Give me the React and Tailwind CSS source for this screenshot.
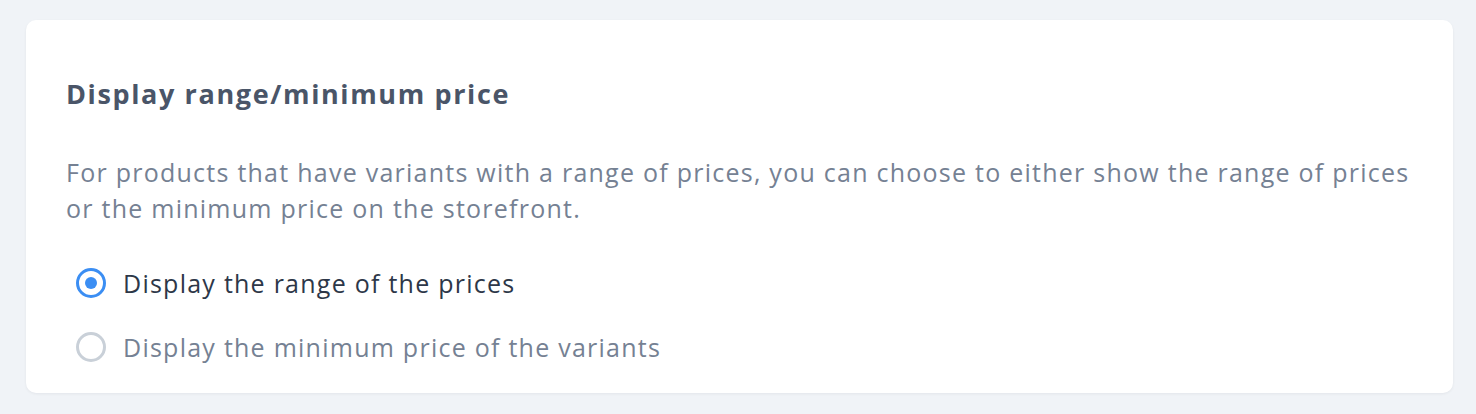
import React, { useState } from 'react';

const options = [
  { id: 'range', label: 'Display the range of the prices' },
  { id: 'minimum', label: 'Display the minimum price of the variants' },
];

const Radio = ({ checked }) => (
  <span
    className={`flex h-[30px] w-[30px] shrink-0 items-center justify-center rounded-full border-[3px] ${
      checked ? 'border-[#3b8ef3]' : 'border-[#c9d0d8]'
    }`}
  >
    {checked && <span className="h-3 w-3 rounded-full bg-[#3b8ef3]" />}
  </span>
);

export default function App() {
  const [selected, setSelected] = useState('range');

  return (
    <div
      className="min-h-[414px] bg-[#f0f3f7] pl-[26px] pr-[23px] pt-5"
      style={{ fontFamily: '"Open Sans", sans-serif' }}
    >
      <div className="rounded-[10px] bg-white px-10 pb-[28px] pt-[54px] shadow-[0_1px_3px_rgba(15,23,42,0.06)]">
        <h2 className="text-[27px] font-bold leading-[40px] tracking-[0.06em] text-[#4a5568]">
          Display range/minimum price
        </h2>
        <p className="mt-10 whitespace-nowrap text-[25px] leading-[36px] tracking-[0.05em] text-[#758193]">
          For products that have variants with a range of prices, you can choose to either show the range of prices
          <br />
          or the minimum price on the storefront.
        </p>
        <div className="mt-[39px] flex flex-col gap-[28px]">
          {options.map((opt) => {
            const checked = selected === opt.id;
            return (
              <label
                key={opt.id}
                className="flex cursor-pointer items-center gap-[17px] pl-[10px]"
                onClick={() => setSelected(opt.id)}
              >
                <Radio checked={checked} />
                <span
                  className={`text-[25px] leading-[36px] tracking-[0.05em] ${
                    checked ? 'text-[#2d3748]' : 'text-[#758193]'
                  }`}
                >
                  {opt.label}
                </span>
              </label>
            );
          })}
        </div>
      </div>
    </div>
  );
}
